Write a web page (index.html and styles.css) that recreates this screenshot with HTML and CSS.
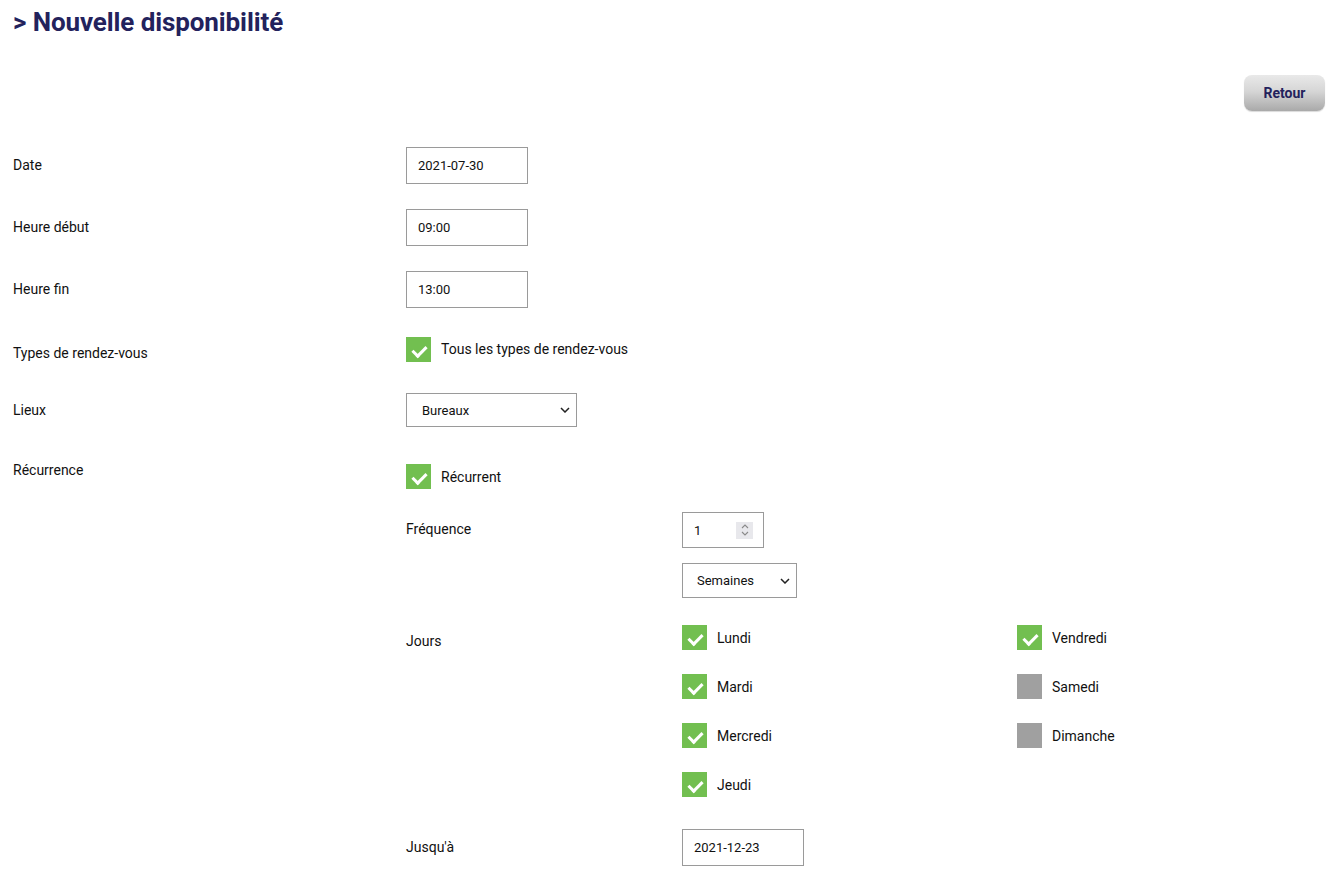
FILE: index.html
```html
<!DOCTYPE html>
<html lang="fr">
<head>
<meta charset="utf-8">
<title>Nouvelle disponibilité</title>
<link rel="stylesheet" href="styles.css">
</head>
<body>
<div class="page">
  <h1 class="title">&gt; Nouvelle disponibilité</h1>
  <div class="toolbar"><button class="btn-back" type="button">Retour</button></div>

  <form class="form">
    <div class="row">
      <label class="label">Date</label>
      <div class="field"><input class="input" type="text" value="2021-07-30"></div>
    </div>
    <div class="row">
      <label class="label">Heure début</label>
      <div class="field"><input class="input" type="text" value="09:00"></div>
    </div>
    <div class="row">
      <label class="label">Heure fin</label>
      <div class="field"><input class="input" type="text" value="13:00"></div>
    </div>
    <div class="row row-types">
      <label class="label">Types de rendez-vous</label>
      <div class="field">
        <span class="check"><span class="box on"></span><span class="check-text">Tous les types de rendez-vous</span></span>
      </div>
    </div>
    <div class="row row-lieux">
      <label class="label">Lieux</label>
      <div class="field">
        <div class="select select-lieux"><span>Bureaux</span><svg class="chev" viewBox="0 0 10 6" width="10" height="6"><path d="M1 1l4 4 4-4" fill="none" stroke="#222" stroke-width="1.5"/></svg></div>
      </div>
    </div>
    <div class="row row-rec">
      <label class="label">Récurrence</label>
      <div class="field">
        <span class="check"><span class="box on"></span><span class="check-text">Récurrent</span></span>

        <div class="sub">
          <div class="subrow sub-freq">
            <label class="label">Fréquence</label>
            <div>
              <div class="number"><span>1</span><span class="spin"><svg viewBox="0 0 10 14" width="10" height="14"><path d="M2 5l3-3 3 3M2 9l3 3 3-3" fill="none" stroke="#8a8a8a" stroke-width="1.1"/></svg></span></div>
              <div class="select select-unit"><span>Semaines</span><svg class="chev" viewBox="0 0 10 6" width="10" height="6"><path d="M1 1l4 4 4-4" fill="none" stroke="#222" stroke-width="1.5"/></svg></div>
            </div>
          </div>
          <div class="subrow sub-days">
            <label class="label">Jours</label>
            <div class="days">
              <span class="check"><span class="box on"></span><span class="check-text">Lundi</span></span>
              <span class="check"><span class="box on"></span><span class="check-text">Mardi</span></span>
              <span class="check"><span class="box on"></span><span class="check-text">Mercredi</span></span>
              <span class="check"><span class="box on"></span><span class="check-text">Jeudi</span></span>
              <span class="check"><span class="box on"></span><span class="check-text">Vendredi</span></span>
              <span class="check"><span class="box"></span><span class="check-text">Samedi</span></span>
              <span class="check"><span class="box"></span><span class="check-text">Dimanche</span></span>
            </div>
          </div>
          <div class="subrow sub-until">
            <label class="label">Jusqu'à</label>
            <div><input class="input" type="text" value="2021-12-23"></div>
          </div>
        </div>
      </div>
    </div>
  </form>
</div>
</body>
</html>
```

FILE: styles.css
```css
* { box-sizing: border-box; }
html, body { margin: 0; padding: 0; background: #fff; }
body { font-family: Roboto, "Noto Sans", "Liberation Sans", sans-serif; color: #111; font-size: 14px; }

.page { padding: 0 19px 0 13px; }

.title {
  margin: 0;
  padding-top: 7px;
  font-size: 26px;
  line-height: 30px;
  font-weight: 700;
  color: #23225c;
  letter-spacing: -0.1px;
}

.toolbar { display: flex; justify-content: flex-end; margin-top: 38px; }
.btn-back {
  width: 81px;
  height: 36px;
  border: none;
  border-radius: 8px;
  background: linear-gradient(#e9e9e9 0%, #d6d6d6 45%, #a9a9a9 100%);
  box-shadow: 0 1px 1px rgba(0,0,0,0.15);
  color: #23225c;
  font-family: inherit;
  font-weight: 700;
  font-size: 14px;
  padding: 0;
}

.form { margin-top: 36px; }

.row {
  display: grid;
  grid-template-columns: 393px 1fr;
  align-items: center;
  margin-bottom: 25px;
}
.label { font-size: 14px; line-height: 16px; color: #111; margin-top: -1px; }

.input {
  width: 122px;
  height: 37px;
  border: 1px solid #9a9a9a;
  border-radius: 0;
  padding: 0 0 0 11px;
  font-family: inherit;
  font-size: 13px;
  color: #111;
  background: #fff;
  outline: none;
  display: block;
}

.check { display: flex; align-items: center; height: 25px; }
.box {
  width: 25px;
  height: 25px;
  background: #a0a0a0;
  flex: none;
  position: relative;
}
.box.on { background: #72bf50; }
.box.on::after {
  content: "";
  position: absolute;
  left: 9px;
  top: 6px;
  width: 6px;
  height: 11px;
  border: solid #fff;
  border-width: 0 3px 3px 0;
  transform: rotate(45deg);
}
.check-text { margin-left: 10px; font-size: 14px; line-height: 16px; }

.row-types { height: 37px; margin-bottom: 23px; }
.row-types .label { margin-top: 2px; }
.row-types .field { margin-top: -5px; }

.select {
  display: flex;
  align-items: center;
  justify-content: space-between;
  border: 1px solid #9a9a9a;
  background: #fff;
  font-size: 13px;
  color: #111;
}
.select-lieux { width: 171px; height: 34px; padding: 0 6px 0 15px; }
.select-unit { width: 115px; height: 35px; padding: 0 6px 0 14px; margin-top: 15px; }

.row-rec { align-items: start; margin-top: 35px; }
.row-rec .label { margin-top: 0; }
.row-rec > .field { margin-top: 2px; }

.sub { margin-top: 23px; }
.subrow {
  display: grid;
  grid-template-columns: 276px 1fr;
  align-items: start;
}
.sub-freq .label { margin-top: 9px; }
.number {
  width: 82px;
  height: 36px;
  border: 1px solid #9a9a9a;
  display: flex;
  align-items: center;
  justify-content: space-between;
  padding: 0 10px 0 11px;
  font-size: 13px;
}
.spin {
  width: 17px;
  height: 17px;
  background: #e8e8ec;
  display: flex;
  align-items: center;
  justify-content: center;
}

.sub-days { margin-top: 27px; }
.sub-days .label { margin-top: 8px; }
.days {
  display: grid;
  grid-template-columns: 335px 1fr;
  grid-template-rows: repeat(4, 25px);
  grid-auto-flow: column;
  row-gap: 24px;
}

.sub-until { margin-top: 32px; align-items: center; }
.sub-until .label { margin-top: -2px; }
```
